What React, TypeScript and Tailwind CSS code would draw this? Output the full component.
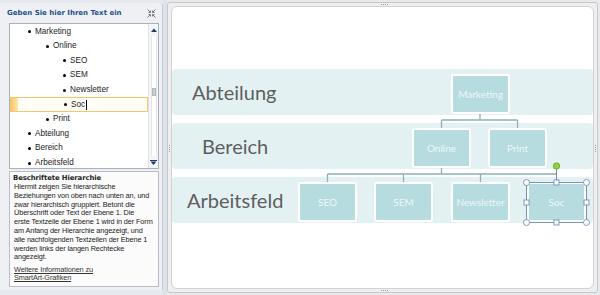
import React from "react";

const items: { text: string; level: number; selected?: boolean }[] = [
  { text: "Marketing", level: 1 },
  { text: "Online", level: 2 },
  { text: "SEO", level: 3 },
  { text: "SEM", level: 3 },
  { text: "Newsletter", level: 3 },
  { text: "Soc", level: 3, selected: true },
  { text: "Print", level: 2 },
  { text: "Abteilung", level: 1 },
  { text: "Bereich", level: 1 },
  { text: "Arbeitsfeld", level: 1 },
];

const indent: Record<number, string> = {
  1: "pl-[18px]",
  2: "pl-[36px]",
  3: "pl-[53px]",
};

const nodes = [
  { label: "Marketing", x: 279, y: 67 },
  { label: "Online", x: 240, y: 121 },
  { label: "Print", x: 316, y: 121 },
  { label: "SEO", x: 126, y: 175 },
  { label: "SEM", x: 202, y: 175 },
  { label: "Newsletter", x: 279, y: 175 },
  { label: "Soc", x: 355, y: 175 },
];

const descLines = [
  "Hiermit zeigen Sie hierarchische",
  "Beziehungen von oben nach unten an, und",
  "zwar hierarchisch gruppiert. Betont die",
  "Überschrift oder Text der Ebene 1. Die",
  "erste Textzeile der Ebene 1 wird in der Form",
  "am Anfang der Hierarchie angezeigt, und",
  "alle nachfolgenden Textzeilen der Ebene 1",
  "werden links der langen Rechtecke",
  "angezeigt.",
];

const CollapseIcon = () => (
  <svg width="9" height="9" viewBox="0 0 9 9" fill="none" stroke="#7a7f87" strokeWidth="1">
    <path d="M0.5 0.5 L3.5 3.5 M3.5 1.5 V3.5 H1.5" />
    <path d="M8.5 0.5 L5.5 3.5 M5.5 1.5 V3.5 H7.5" />
    <path d="M0.5 8.5 L3.5 5.5 M3.5 7.5 V5.5 H1.5" />
    <path d="M8.5 8.5 L5.5 5.5 M5.5 7.5 V5.5 H7.5" />
  </svg>
);

const TextPane = () => (
  <div className="w-[163px] h-full flex flex-col bg-[#eef0f3] border-r border-[#c3c8cf] rounded-tr-[4px] font-['Liberation_Sans',sans-serif]">
    <div className="h-[20px] flex items-center justify-between pl-[7px] pr-[6px] pt-[1px]">
      <span className="font-['DejaVu_Sans',sans-serif] text-[7px] font-bold text-[#1f4f8f]">
        Geben Sie hier Ihren Text ein
      </span>
      <CollapseIcon />
    </div>

    <div className="ml-[9px] w-[150px] h-[146px] flex bg-white border border-[#a9b1bb]">
      <div className="flex-1 pt-[0.5px]">
        {items.map((it) => (
          <div
            key={it.text}
            className={
              "h-[14.6px] flex items-center text-[8.2px] text-[#1b1b1b] relative " +
              indent[it.level] +
              (it.selected ? " border border-[#f3c66f] bg-[#fffdf6]" : "")
            }
          >
            {it.selected && (
              <span className="absolute left-0 top-0 bottom-0 w-[7px] bg-gradient-to-r from-[#f8c860] to-[#fde7b0]" />
            )}
            <span className="w-[3px] h-[3px] rounded-full bg-black mr-[4px]" />
            <span>{it.text}</span>
            {it.selected && <span className="w-px h-[10px] bg-black ml-px" />}
          </div>
        ))}
      </div>
      <div className="w-[10px] flex flex-col items-center border-l border-[#dfe3e8] bg-[#f4f5f7]">
        <div className="h-[12px] flex items-center justify-center">
          <svg width="6" height="4" viewBox="0 0 6 4">
            <path d="M0 4 L3 0.5 L6 4 Z" fill="#1e3b6e" />
          </svg>
        </div>
        <div className="flex-1 w-[6px] border-x border-[#e4e6ea] bg-white flex flex-col">
          <div className="h-[52px]" />
          <div className="h-[8px] bg-[#c9ccd2] border border-[#b3b7be]" />
        </div>
        <div className="h-[12px] flex items-center justify-center">
          <svg width="7" height="5" viewBox="0 0 7 5">
            <path d="M0 0 H7 V1 H0 Z M0.5 1.5 L3.5 5 L6.5 1.5 Z" fill="#1e3b6e" />
          </svg>
        </div>
      </div>
    </div>

    <div className="ml-[9px] mt-[2px] w-[150px] h-[116px] bg-[#fbfbfb] border border-[#b9bec6] px-[3px] pt-[1px] text-[#222] text-[7.3px] leading-[8.8px] whitespace-nowrap tracking-[-0.1px]">
      <div className="font-['DejaVu_Sans',sans-serif] font-bold text-[6.9px] leading-[10px] tracking-[-0.1px]">
        Beschriftete Hierarchie
      </div>
      <div className="pl-[1px]">
        {descLines.map((l) => (
          <div key={l}>{l}</div>
        ))}
      </div>
      <div className="pl-[1px] mt-[4px] underline text-[#333] leading-[8px]">
        <div>Weitere Informationen zu</div>
        <div>SmartArt-Grafiken</div>
      </div>
    </div>
  </div>
);

const Dots = ({ vertical }: { vertical?: boolean }) => (
  <span className={"flex gap-[1px] " + (vertical ? "flex-col" : "flex-row")}>
    <span className="w-px h-px bg-[#9a9a9a]" />
    <span className="w-px h-px bg-[#9a9a9a]" />
    <span className="w-px h-px bg-[#9a9a9a]" />
    <span className="w-px h-px bg-[#9a9a9a]" />
  </span>
);

const Handle = ({ x, y, round }: { x: number; y: number; round?: boolean }) =>
  round ? (
    <circle cx={x} cy={y} r="3" fill="white" stroke="#7490b4" strokeWidth="0.9" />
  ) : (
    <rect x={x - 2.5} y={y - 2.5} width="5" height="5" fill="white" stroke="#7490b4" strokeWidth="0.9" />
  );

const Diagram = () => (
  <div className="relative w-[431px] h-[291px] mt-[2px] border border-[#c8c8c8] rounded-[3px] bg-[#efefef] p-[3px]">
    <div className="absolute top-[1px] left-[213px]">
      <Dots />
    </div>
    <div className="absolute bottom-[1px] left-[213px]">
      <Dots />
    </div>
    <div className="absolute left-[1px] top-[142px]">
      <Dots vertical />
    </div>
    <div className="absolute right-[1px] top-[142px]">
      <Dots vertical />
    </div>

    <div className="relative h-full border border-[#d2d2d2] rounded-[6px] bg-white font-['Lato',sans-serif]">
      <div className="flex flex-col gap-[8px] pt-[62px]">
        <div className="h-[46px] rounded-[4px] bg-[#e4f1f3] flex items-center pl-[20px] text-[20px] text-[#5e5e5e]">
          Abteilung
        </div>
        <div className="h-[46px] rounded-[4px] bg-[#e4f1f3] flex items-center pl-[30px] text-[20px] text-[#5e5e5e]">
          Bereich
        </div>
        <div className="h-[46px] rounded-[4px] bg-[#e4f1f3] flex items-center pl-[15px] text-[20px] text-[#5e5e5e]">
          Arbeitsfeld
        </div>
      </div>

      <svg className="absolute left-0 top-0" width="421" height="281" fill="none">
        <g stroke="#8ab2b7" strokeWidth="1.3">
          <path d="M308 106 V113 M269.5 113 H345.5 M269.5 113 V121 M345.5 113 V121" />
          <path d="M269.5 161 V167 M155.5 167 H384.5 M155.5 167 V175 M231.5 167 V175 M308.5 167 V175" />
        </g>
      </svg>

      {nodes.map((n) => (
        <div
          key={n.label}
          className="absolute w-[59px] h-[40px] rounded-[3px] border-[2px] border-white bg-[#b6dce0] flex items-center justify-center text-[10px] text-[#edf7f8]"
          style={{ left: n.x, top: n.y }}
        >
          {n.label}
        </div>
      ))}

      <svg className="absolute left-0 top-0" width="421" height="281" fill="none">
        <path d="M384.5 159 V175" stroke="#5a7fae" strokeWidth="0.9" />
        <rect x="354.5" y="175.5" width="60" height="40" stroke="#6d89b0" strokeWidth="0.9" />
        <circle cx="384.5" cy="159" r="3.2" fill="#8fd33f" stroke="#5fa323" strokeWidth="0.8" />
        <Handle x={354.5} y={175.5} round />
        <Handle x={414.5} y={175.5} round />
        <Handle x={354.5} y={215.5} round />
        <Handle x={414.5} y={215.5} round />
        <Handle x={384.5} y={175.5} />
        <Handle x={384.5} y={215.5} />
        <Handle x={354.5} y={195.5} />
        <Handle x={414.5} y={195.5} />
      </svg>
    </div>
  </div>
);

export default function App() {
  return (
    <div className="w-[600px] h-[295px] flex bg-[#e6e9ee] overflow-hidden">
      <div className="pt-[3px] pb-[5px] h-full">
        <TextPane />
      </div>
      <div className="w-[4px] h-full bg-[#dde3ea]" />
      <Diagram />
    </div>
  );
}
